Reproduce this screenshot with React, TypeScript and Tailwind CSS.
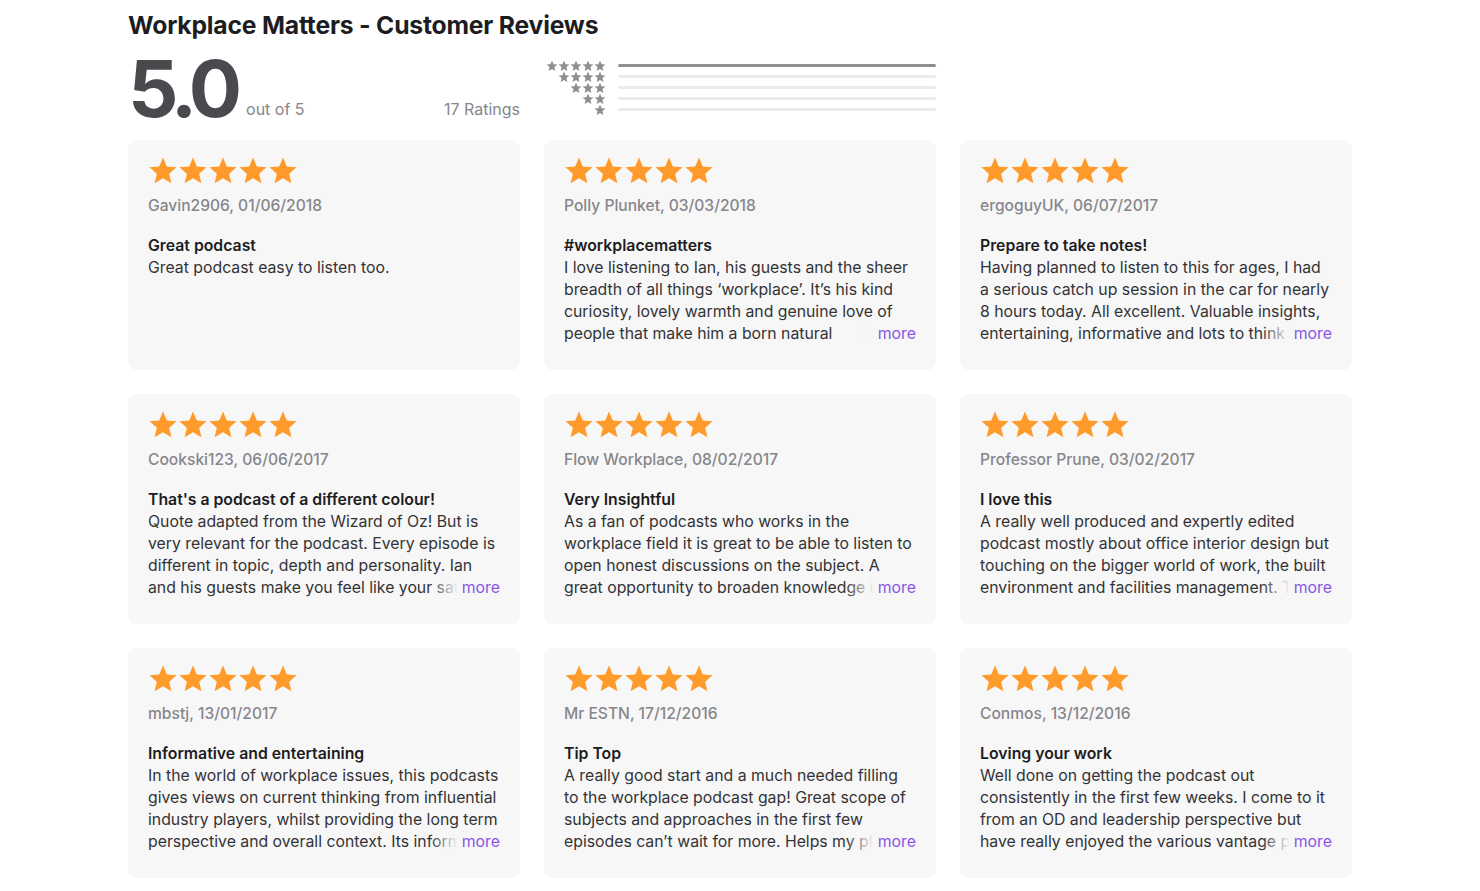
import React from "react";

const Star = ({ className }: { className?: string }) => (
  <svg viewBox="0 0 24 24" className={className} fill="currentColor">
    <path d="M12 1.2l3.05 7.2 7.8.68-5.92 5.13 1.78 7.63L12 17.8l-6.71 4.04 1.78-7.63L1.15 9.08l7.8-.68z" />
  </svg>
);

type Review = { author: string; date: string; title: string; body: string };

const reviews: Review[] = [
  { author: "Gavin2906", date: "01/06/2018", title: "Great podcast", body: "Great podcast easy to listen too." },
  {
    author: "Polly Plunket",
    date: "03/03/2018",
    title: "#workplacematters",
    body: "I love listening to Ian, his guests and the sheer breadth of all things \u2018workplace\u2019. It\u2019s his kind curiosity, lovely warmth and genuine love of people that make him a born natural communicator and host. Keep it up!",
  },
  {
    author: "ergoguyUK",
    date: "06/07/2017",
    title: "Prepare to take notes!",
    body: "Having planned to listen to this for ages, I had a serious catch up session in the car for nearly 8 hours today. All excellent. Valuable insights, entertaining, informative and lots to think about afterwards.",
  },
  {
    author: "Cookski123",
    date: "06/06/2017",
    title: "That's a podcast of a different colour!",
    body: "Quote adapted from the Wizard of Oz! But is very relevant for the podcast. Every episode is different in topic, depth and personality. Ian and his guests make you feel like your sat with them in the room.",
  },
  {
    author: "Flow Workplace",
    date: "08/02/2017",
    title: "Very Insightful",
    body: "As a fan of podcasts who works in the workplace field it is great to be able to listen to open honest discussions on the subject. A great opportunity to broaden knowledge in the field.",
  },
  {
    author: "Professor Prune",
    date: "03/02/2017",
    title: "I love this",
    body: "A really well produced and expertly edited podcast mostly about office interior design but touching on the bigger world of work, the built environment and facilities management. The guests are great.",
  },
  {
    author: "mbstj",
    date: "13/01/2017",
    title: "Informative and entertaining",
    body: "In the world of workplace issues, this podcasts gives views on current thinking from influential industry players, whilst providing the long term perspective and overall context. Its informative and fun.",
  },
  {
    author: "Mr ESTN",
    date: "17/12/2016",
    title: "Tip Top",
    body: "A really good start and a much needed filling to the workplace podcast gap! Great scope of subjects and approaches in the first few episodes can\u2019t wait for more. Helps my plans for the office.",
  },
  {
    author: "Conmos",
    date: "13/12/2016",
    title: "Loving your work",
    body: "Well done on getting the podcast out consistently in the first few weeks. I come to it from an OD and leadership perspective but have really enjoyed the various vantage points of the guests.",
  },
];

const Card = ({ r }: { r: Review }) => (
  <div className="h-[230px] rounded-[9px] bg-[#f7f7f7] px-5 pt-[15px]">
    <div className="flex h-[32px] items-center text-[#fe9b2a]">
      {[0, 1, 2, 3, 4].map((i) => (
        <Star key={i} className="h-[32px] w-[30px] shrink-0" />
      ))}
    </div>
    <div className="mt-[9px] text-[15.6px] leading-[20px] font-medium text-[#86868b]">
      {r.author}, {r.date}
    </div>
    <div className="mt-[19px] text-[15.8px] leading-[22px] font-semibold text-[#1d1d1f]">{r.title}</div>
    <div className="relative h-[88px] overflow-hidden text-[15.8px] leading-[22px] text-[#333336]">
      <p>{r.body}</p>
      {r.body.length > 60 && (
        <div className="absolute right-0 bottom-0 flex h-[22px] items-stretch">
          <div className="w-[28px] bg-gradient-to-r from-[#f7f7f7]/0 to-[#f7f7f7]" />
          <span className="bg-[#f7f7f7] pl-[4px] text-[#8b55e6]">more</span>
        </div>
      )}
    </div>
  </div>
);

export default function App() {
  return (
    <div className="min-h-[891px] bg-white font-['Inter',sans-serif] antialiased">
      <div className="w-[1224px] ml-[128px]">
        <h1 className="pt-[9px] text-[24.7px] leading-[32px] font-bold tracking-[-0.2px] text-[#1d1d1f]">
          Workplace Matters - Customer Reviews
        </h1>
        <div className="grid grid-cols-3 gap-x-6">
          <div className="flex h-[90px] items-end justify-between pb-[3px]">
            <div className="flex items-end">
              <span className="text-[79px] leading-[1] font-bold tracking-[-6px] text-[#4a4a4e]">5.0</span>
              <span className="ml-[10px] mb-[9px] text-[16px] leading-[20px] text-[#86868b]">out of 5</span>
            </div>
            <span className="mb-[9px] text-[16px] leading-[20px] text-[#86868b]">17 Ratings</span>
          </div>
          <div className="flex flex-col pt-[19px]">
            {[5, 4, 3, 2, 1].map((n) => (
              <div key={n} className="flex h-[11px] items-center">
                <div className="flex w-[62px] justify-end text-[#8e8e93]">
                  {Array.from({ length: n }).map((_, i) => (
                    <Star key={i} className="h-[12px] w-[12px]" />
                  ))}
                </div>
                <div className={"ml-[12px] flex-1 rounded-full " + (n === 5 ? "h-[3px] bg-[#8e8e93]" : "h-[3px] bg-[#ebebef]")} />
              </div>
            ))}
          </div>
          <div />
        </div>
        <div className="mt-[9px] grid grid-cols-3 gap-6">
          {reviews.map((r, i) => (
            <Card key={i} r={r} />
          ))}
        </div>
      </div>
    </div>
  );
}
